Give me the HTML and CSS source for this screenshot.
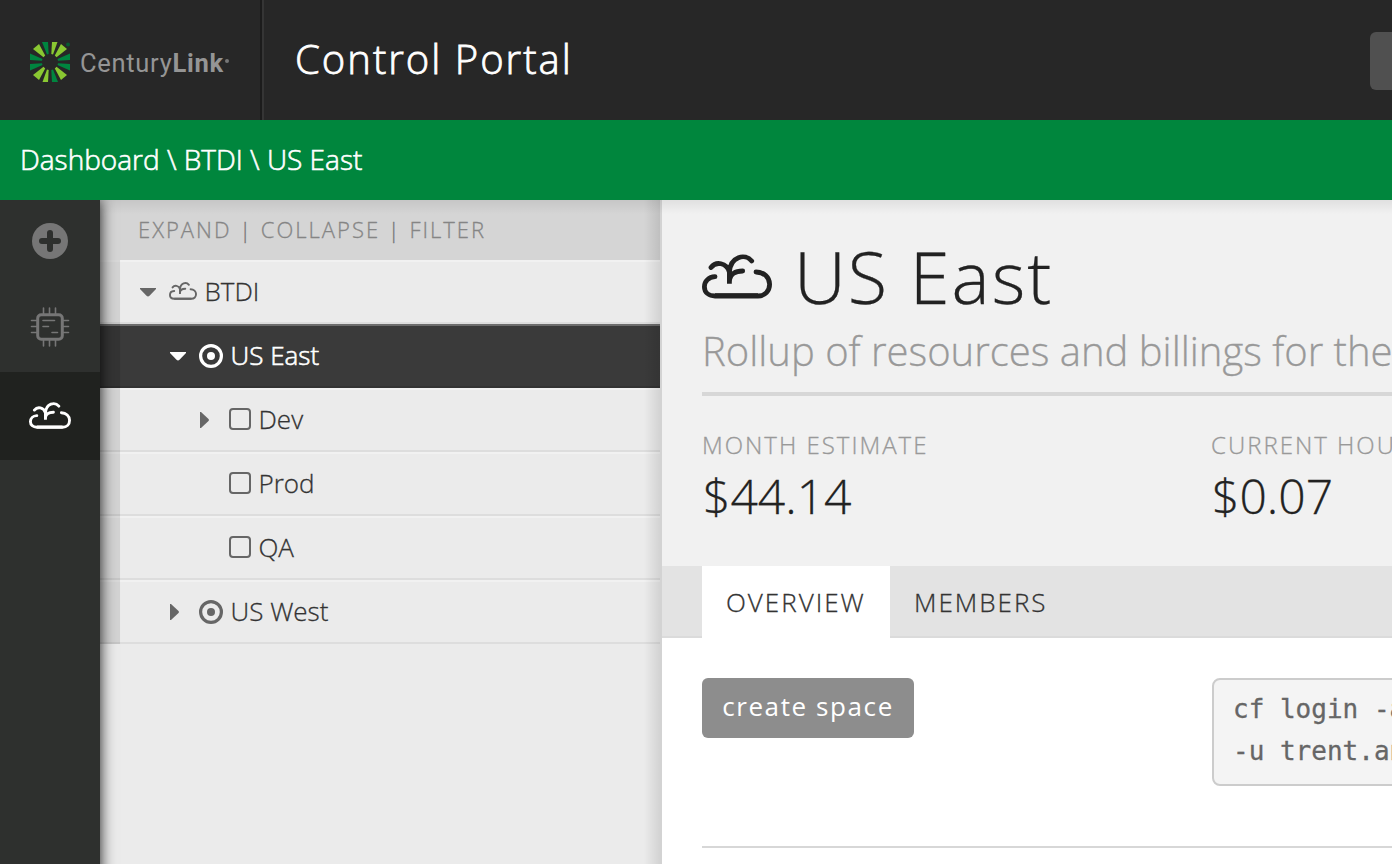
FILE: index.html
```html
<!DOCTYPE html>
<html lang="en">
<head>
<meta charset="utf-8">
<title>Control Portal</title>
<link rel="stylesheet" href="styles.css">
</head>
<body>
<svg class="defs" aria-hidden="true">
  <symbol id="cloud" viewBox="0 0 70 45">
    <g fill="none" stroke="currentColor" stroke-width="4.8" stroke-linecap="round">
      <path d="M13 22.700C6.500 23 2.400 27.500 2.400 32.700C2.400 38.500 7 42 13 42H56C63 42 67.600 37 67.600 30.300C67.600 23.500 62 18 54 18"/>
      <path d="M9 13.500C14 7 24.500 8.500 27.400 18C28.500 2.500 43 -1 49.700 7"/>
      <path d="M27.400 26C28 20.500 33 17 40.700 17"/>
      <path stroke-linecap="butt" d="M27.400 15V29.700M13 41.700H56"/>
    </g>
  </symbol>
  <symbol id="target" viewBox="0 0 24 24">
    <circle cx="12" cy="12" r="10.400" fill="none" stroke="currentColor" stroke-width="3.200"/>
    <circle cx="12" cy="12" r="4" fill="currentColor"/>
  </symbol>
</svg>
<header class="topbar">
  <div class="brand">
    <svg class="burst" viewBox="-20 -20 40 40">
      <defs><clipPath id="round"><rect x="-20" y="-20" width="40" height="40" rx="11"/></clipPath></defs>
      <g clip-path="url(#round)">
        <g fill="#8ac832">
          <path d="M1.300 -8L2-20H7.500L3-7.500Z"/>
          <path d="M4.800-6.500L11-18L17-13L6.500-4.800Z"/>
          <path d="M-4.800-6.500L-11-18L-17-13L-6.500-4.800Z"/>
          <path d="M-4.800 6.500L-11 18L-17 13L-6.500 4.800Z"/>
          <path d="M4.800 6.500L11 18L17 13L6.500 4.800Z"/>
          <path d="M-1.300 8L-2 20H-7.500L-3 7.500Z"/>
        </g>
        <g fill="#00853f">
          <path d="M-1.300-8L-2-20H-8L-3-7.500Z"/>
          <path d="M1.300 8L2 20H8L3 7.500Z"/>
          <path d="M8-1.300L20-2V-8.500L7.500-3Z"/>
          <path d="M8 1.300L20 2V8.500L7.500 3Z"/>
          <path d="M-8-1.300L-20-2V-8.500L-7.500-3Z"/>
          <path d="M-8 1.300L-20 2V8.500L-7.500 3Z"/>
        </g>
      </g>
      <circle cx="18" cy="-17.500" r="2" fill="#075a31"/>
    </svg>
    <span class="wordmark">Century<b>Link</b></span><i class="reg"></i>
  </div>
  <div class="product">Control Portal</div>
  <div class="top-button"></div>
</header>
<nav class="crumbs">Dashboard \ BTDI \ US East</nav>
<div class="workspace">
  <aside class="rail">
    <a class="rail-item add"><svg width="36" height="36" viewBox="0 0 36 36"><circle cx="18" cy="18" r="18" fill="#767676"/><path d="M18 10V26M10 18H26" stroke="#2e302e" stroke-width="6" stroke-linecap="round"/></svg></a>
    <a class="rail-item chip"><svg width="40" height="40" viewBox="0 0 40 40" fill="none" stroke="#767676"><rect x="7.700" y="7.700" width="24.600" height="24.600" rx="3.500" stroke-width="3"/><path stroke-width="1.600" d="M13.500 1V7M19.500 1V7M25.500 1V7M13.500 33V39M19.500 33V39M25.500 33V39M1.500 13.500H7M1.500 19.500H7M1.500 25.500H7M33 13.500H38.500M33 19.500H38.500M33 25.500H38.500M13 13.500H24.500M13 19.500H18.500M22 25.500H27.500" stroke-linecap="round"/></svg></a>
    <a class="rail-item active"><svg width="42" height="27"><use href="#cloud"/></svg></a>
  </aside>
  <section class="tree">
    <div class="tools"><span>EXPAND</span> <i>|</i> <span>COLLAPSE</span> <i>|</i> <span>FILTER</span></div>
    <div class="row l1"><svg class="arrow" width="16" height="9" viewBox="0 0 16 9"><path d="M0 0H16V1L9.500 7.800Q8 9.400 6.500 7.800L0 1Z"/></svg><svg class="cl" width="28" height="18"><use href="#cloud"/></svg><span>BTDI</span></div>
    <div class="row l2 selected"><svg class="arrow" width="16" height="9" viewBox="0 0 16 9"><path d="M0 0H16V1L9.500 7.800Q8 9.400 6.500 7.800L0 1Z"/></svg><svg class="tg" width="24" height="24"><use href="#target"/></svg><span>US East</span></div>
    <div class="row l3"><svg class="arrow side" width="9" height="16" viewBox="0 0 9 16"><path d="M0 0H1L8.500 7Q9.400 8 8.500 9L1 16H0Z"/></svg><i class="box"></i><span>Dev</span></div>
    <div class="row l3"><i class="box lone"></i><span>Prod</span></div>
    <div class="row l3"><i class="box lone"></i><span>QA</span></div>
    <div class="row l2"><svg class="arrow side" width="9" height="16" viewBox="0 0 9 16"><path d="M0 0H1L8.500 7Q9.400 8 8.500 9L1 16H0Z"/></svg><svg class="tg" width="24" height="24"><use href="#target"/></svg><span>US West</span></div>
  </section>
  <main class="content">
    <div class="summary">
      <h1><svg width="70" height="45"><use href="#cloud"/></svg><span>US East</span></h1>
      <p class="lead">Rollup of resources and billings for the</p>
      <div class="stats">
        <div><label>MONTH ESTIMATE</label><strong>$44.14</strong></div>
        <div><label>CURRENT HOU</label><strong>$0.07</strong></div>
      </div>
    </div>
    <div class="tabs"><a class="tab current">OVERVIEW</a><a class="tab">MEMBERS</a></div>
    <div class="panel">
      <div><button>create space</button></div>
      <pre>cf login -a
-u trent.an</pre>
    </div>
  </main>
</div>
</body>
</html>
```
FILE: styles.css
```css
* { box-sizing: border-box; }
body { margin: 0; width: 1392px; height: 864px; overflow: hidden; font-family: "Open Sans", sans-serif; font-weight: 300; color: #222; display: flex; flex-direction: column; -webkit-text-stroke: 0.3px; }
.defs { display: none; }
svg { display: block; flex: none; }
.topbar { height: 120px; flex: none; background: #272727; display: flex; overflow: hidden; }
.brand { width: 264px; flex: none; border-right: 2px solid #353535; box-shadow: inset -2px 0 #1c1c1c; padding: 42px 0 0 30px; display: flex; }
.burst { width: 40px; height: 40px; }
.wordmark { margin-left: 10px; font: 400 25.5px/42px Roboto, sans-serif; letter-spacing: 0.7px; color: #959595; white-space: nowrap; -webkit-text-stroke: 0; }
.wordmark b { font-weight: 700; }
.reg { width: 4px; height: 4px; margin: 17px 0 0 1px; border-radius: 50%; background: #777; }
.product { margin-left: 31px; font-size: 40px; line-height: 118px; letter-spacing: 2px; color: #fff; flex: 1; white-space: nowrap; -webkit-text-stroke: 0.8px; }
.top-button { width: 60px; height: 58px; margin: 32px -38px 0 0; border-radius: 6px; background: #505050; }
.crumbs { height: 80px; flex: none; background: #00863d; color: #fff; font-size: 28px; line-height: 78px; padding-left: 20px; letter-spacing: 0; -webkit-text-stroke: 0.6px; }
.workspace { flex: 1; display: flex; position: relative; min-height: 0; }
.workspace::after { content: ""; position: absolute; inset: 0 0 auto 0; height: 14px; background: linear-gradient(rgba(0,0,0,.07), transparent); }
.rail { width: 100px; flex: none; background: #2e302e; z-index: 1; margin-bottom: -30px; box-shadow: 0 0 14px rgba(0,0,0,.9); clip-path: inset(0 -24px 0 0); }
.rail-item { height: 86px; display: flex; align-items: center; justify-content: center; }
.rail-item.add { padding-bottom: 4px; }
.rail-item.chip { padding-bottom: 4px; }
.rail-item.active { height: 88px; background: #20221f; color: #fff; padding-bottom: 1px; }
.tree { width: 562px; flex: none; background: #ebebeb; border-right: 2px solid #d3d3d3; position: relative; }
.tree::after { content: ""; position: absolute; inset: 0 0 0 auto; width: 16px; background: linear-gradient(90deg, transparent, rgba(0,0,0,.1)); }
.tools { height: 60px; background: #d5d5d5; color: #858585; font-size: 22px; line-height: 59px; padding-left: 38px; letter-spacing: 2px; white-space: nowrap; }
.tools i { font-style: normal; color: #777; }
.row { height: 64px; position: relative; display: flex; align-items: center; border-top: 2px solid #f1f1f1; border-bottom: 2px solid #dddddd; font-size: 26px; letter-spacing: 0; color: #333; white-space: nowrap; }
.row::before { content: ""; position: absolute; inset: -2px auto -2px 0; width: 20px; background: rgba(0,0,0,.1); }
.row span { margin: -2px 0 0 0.5px; }
.row svg { color: #666; fill: #666; }
.l1 { padding-left: 40px; }
.l2 { padding-left: 70px; }
.l3 { padding-left: 100px; }
.arrow { margin-right: 13px; }
.arrow.side { margin-right: 20px; }
.cl { margin: -2px 7px 0 0; }
.tg { margin-right: 7px; }
.box { width: 22px; height: 22px; border: 2px solid #666; border-radius: 4px; margin: 0 7px 2px 0; }
.box.lone { margin-left: 29px; }
.row.selected { background: #3a3a3a; color: #fff; border-top-color: #6c6c6c; border-bottom-color: #333; -webkit-text-stroke: 0.6px; }
.row.selected svg { color: #fff; fill: #fff; }
.content { width: 730px; flex: none; background: #fff; overflow: hidden; }
.summary { height: 366px; padding: 34px 0 0 40px; background: #f1f1f1; }
h1 { margin: 0; height: 84px; display: flex; align-items: center; font-size: 72px; font-weight: 300; letter-spacing: 2px; line-height: 84px; }
h1 svg { margin-top: 1px; }
h1 span { margin: -1px 0 0 22px; }
.lead { margin: 0; width: 730px; height: 78px; border-bottom: 4px solid #d7d7d7; font-size: 40px; line-height: 66px; color: #999; white-space: nowrap; }
.stats { display: grid; grid-template-columns: 509px 510px; padding-top: 32px; }
.stats label { display: block; font-size: 24px; line-height: 34px; letter-spacing: 2px; color: #999; white-space: nowrap; }
.stats strong { display: block; font-weight: 300; font-size: 48px; line-height: 68px; padding-left: 1px; }
.tabs { height: 72px; display: flex; padding-left: 40px; background: #e3e3e3; box-shadow: inset 0 -2px #dbdbdb; }
.tab { padding: 0 24px; font-size: 26px; line-height: 72px; letter-spacing: 2px; color: #333; }
.tab.current { background: #fff; width: 188px; }
.panel { height: 210px; margin-left: 40px; padding-top: 40px; width: 730px; border-bottom: 2px solid #d7d7d7; display: grid; grid-template-columns: 510px 510px; align-items: start; }
button { width: 212px; height: 60px; border: 0; border-radius: 6px; background: #8d8d8d; color: #fff; font: 400 26px/54px "Open Sans", sans-serif; letter-spacing: 1.6px; padding: 0 0 5px; white-space: nowrap; -webkit-text-stroke: 0; }
pre { margin: 0; height: 108px; border: 2px solid #ccc; border-radius: 8px; background: #f4f4f4; padding: 8px 19px; font: 26px/42px "DejaVu Sans Mono", monospace; color: #666; }
```
